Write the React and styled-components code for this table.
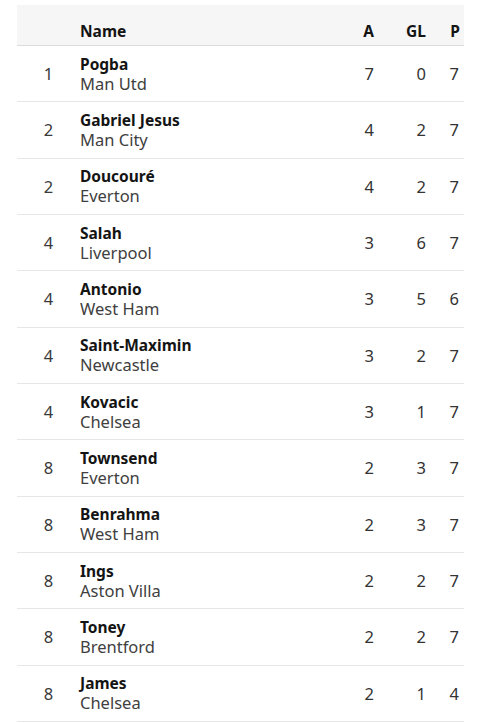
import React from "react";
import styled, { createGlobalStyle } from "styled-components";

const Global = createGlobalStyle`
  html, body { margin: 0; padding: 0; background: #fff; }
  body { font-family: "Noto Sans", "Open Sans", sans-serif; }
`;

const Wrap = styled.div`
  padding: 5px 16px 0 17px;
  width: 480px;
  box-sizing: border-box;
  overflow: hidden;
`;

const Table = styled.div`
  width: 447px;
  display: flex;
  flex-direction: column;
`;

const cols = "63px 1fr 54px 52px 38px";

const HeaderRow = styled.div`
  display: grid;
  grid-template-columns: ${cols};
  align-items: end;
  height: 41px;
  box-sizing: border-box;
  padding-bottom: 3px;
  background: #f6f6f6;
  border-bottom: 1px solid #dcdcdc;
  font-weight: 700;
  font-size: 15.5px;
  color: #141414;
`;

const Row = styled.div`
  display: grid;
  grid-template-columns: ${cols};
  align-items: center;
  height: 56.33px;
  box-sizing: border-box;
  border-bottom: 1px solid #e6e6e6;
  color: #333;
  font-size: 16.5px;
`;

const Cell = styled.div`
  text-align: ${(p) => p.$align || "left"};
  padding-right: ${(p) => p.$pr || 0}px;
`;

const Rank = styled.div`
  text-align: center;
  color: #3a3a3a;
`;

const NameCell = styled.div`
  display: flex;
  flex-direction: column;
  line-height: 19px;
`;

const Player = styled.span`
  font-weight: 700;
  font-size: 15.5px;
  color: #141414;
`;

const Club = styled.span`
  color: #404040;
`;

const data = [
  [1, "Pogba", "Man Utd", 7, 0, 7],
  [2, "Gabriel Jesus", "Man City", 4, 2, 7],
  [2, "Doucouré", "Everton", 4, 2, 7],
  [4, "Salah", "Liverpool", 3, 6, 7],
  [4, "Antonio", "West Ham", 3, 5, 6],
  [4, "Saint-Maximin", "Newcastle", 3, 2, 7],
  [4, "Kovacic", "Chelsea", 3, 1, 7],
  [8, "Townsend", "Everton", 2, 3, 7],
  [8, "Benrahma", "West Ham", 2, 3, 7],
  [8, "Ings", "Aston Villa", 2, 2, 7],
  [8, "Toney", "Brentford", 2, 2, 7],
  [8, "James", "Chelsea", 2, 1, 4],
];

export default function App() {
  return (
    <Wrap>
      <Global />
      <Table>
        <HeaderRow>
          <span />
          <Cell>Name</Cell>
          <Cell $align="right">A</Cell>
          <Cell $align="right">GL</Cell>
          <Cell $align="right" $pr={4}>P</Cell>
        </HeaderRow>
        {data.map(([r, n, c, a, g, p], i) => (
          <Row key={i}>
            <Rank>{r}</Rank>
            <NameCell>
              <Player>{n}</Player>
              <Club>{c}</Club>
            </NameCell>
            <Cell $align="right">{a}</Cell>
            <Cell $align="right">{g}</Cell>
            <Cell $align="right" $pr={5}>{p}</Cell>
          </Row>
        ))}
      </Table>
    </Wrap>
  );
}
